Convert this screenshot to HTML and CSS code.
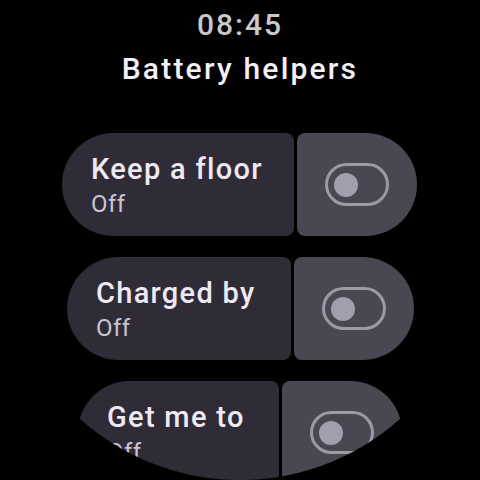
FILE: index.html
```html
<!DOCTYPE html>
<html>
<head>
<meta charset="utf-8">
<link rel="stylesheet" href="styles.css">
</head>
<body>
<div class="screen">
  <div class="time">08:45</div>
  <div class="title">Battery helpers</div>
  <div class="list">
    <div class="row row-1">
      <div class="label">
        <div class="name">Keep a floor</div>
        <div class="state">Off</div>
      </div>
      <div class="control"><span class="switch"><span class="thumb"></span></span></div>
    </div>
    <div class="row row-2">
      <div class="label">
        <div class="name">Charged by</div>
        <div class="state">Off</div>
      </div>
      <div class="control"><span class="switch"><span class="thumb"></span></span></div>
    </div>
    <div class="row row-3">
      <div class="label">
        <div class="name">Get me to</div>
        <div class="state">Off</div>
      </div>
      <div class="control"><span class="switch"><span class="thumb"></span></span></div>
    </div>
  </div>
</div>
</body>
</html>
```
FILE: styles.css
```css
html, body {
  margin: 0;
  padding: 0;
  background: #000;
}
.screen {
  width: 480px;
  height: 480px;
  border-radius: 50%;
  overflow: hidden;
  background: #000;
  display: flex;
  flex-direction: column;
  align-items: center;
  padding-top: 5px;
  box-sizing: border-box;
  font-family: Roboto, "Noto Sans", sans-serif;
}
.time {
  font-size: 30px;
  line-height: 40px;
  letter-spacing: 2px;
  color: #c9c9c9;
  font-weight: 500;
  margin-bottom: 6px;
}
.title {
  font-size: 30px;
  line-height: 36px;
  font-weight: 500;
  color: #f4f0f8;
  letter-spacing: 2.2px;
  margin-bottom: 46px;
}
.list {
  align-self: stretch;
  display: flex;
  flex-direction: column;
  gap: 21px;
}
.row {
  display: flex;
  gap: 3px;
  height: 103px;
  flex-shrink: 0;
}
.row-1 { margin-left: 62px; width: 355px; }
.row-2 { margin-left: 67px; width: 347px; }
.row-3 { margin-left: 78px; width: 324px; }
.label {
  flex: 1;
  background: #2f2c38;
  border-radius: 52px 8px 8px 52px;
  padding-left: 29px;
  display: flex;
  flex-direction: column;
  justify-content: center;
}
.name {
  font-size: 29px;
  line-height: 38px;
  font-weight: 500;
  color: #efe9f5;
  letter-spacing: 1.3px;
}
.state {
  font-size: 24px;
  line-height: 32px;
  color: #c9c4d0;
  letter-spacing: 0.5px;
}
.control {
  width: 120px;
  flex-shrink: 0;
  background: #4a4652;
  border-radius: 8px 52px 52px 8px;
  display: flex;
  align-items: center;
  justify-content: center;
}
.switch {
  width: 64px;
  height: 43px;
  box-sizing: border-box;
  border: 3px solid #9c98a4;
  border-radius: 22px;
  display: flex;
  align-items: center;
  padding-left: 6px;
}
.thumb {
  width: 24px;
  height: 24px;
  border-radius: 50%;
  background: #a29eab;
}
```
